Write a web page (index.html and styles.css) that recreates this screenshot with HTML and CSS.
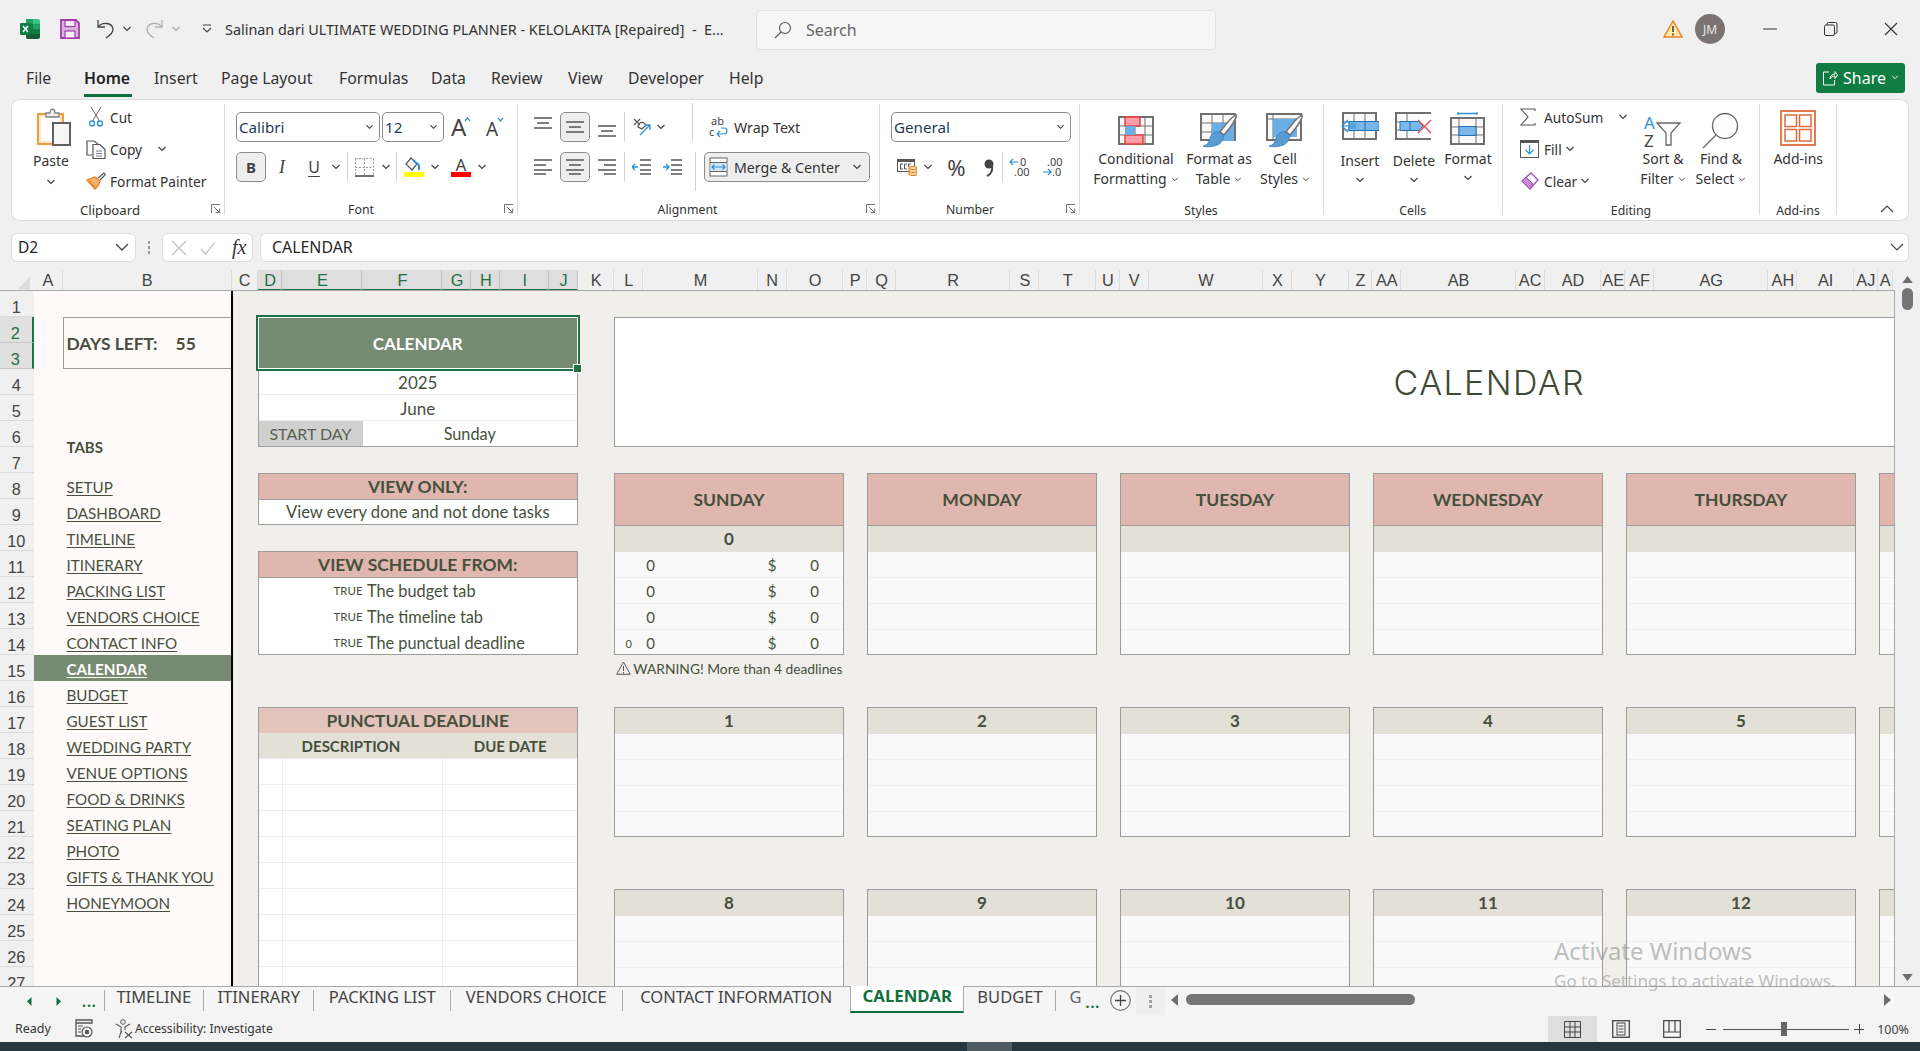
FILE: index.html
```html
<!DOCTYPE html>
<html lang="en">
<head>
<meta charset="utf-8">
<title>Salinan dari ULTIMATE WEDDING PLANNER - KELOLAKITA</title>
<link rel="stylesheet" href="styles.css">
</head>
<body>
<svg class="defs" width="0" height="0">
  <defs>
    <symbol id="chev" viewBox="0 0 10 6"><path d="M1.5 1l3.5 3.5L8.5 1" fill="none" stroke="#404040" stroke-width="1.2"/></symbol>
    <symbol id="launch" viewBox="0 0 11 11"><path d="M.5 10V.5H10M3 3l6.5 6.5M9.5 5v4.5H5" fill="none" stroke="#606060" stroke-width="1"/></symbol>
    <symbol id="brush" viewBox="0 0 38 35"><path d="M36 2C37 5 31 14 24 22l-4-3C26 11 33 3 36 2z" fill="#fff" stroke="#777" stroke-width="1.6"/><path d="M19 19l5 4c-1 5-4 9-10 10-4 1-9 1-11 0 5-1 6-4 7-8 1-4 5-7 9-6z" fill="#5b9bd5" stroke="#3a7fc0" stroke-width=".8"/></symbol>
    <symbol id="al3" viewBox="0 0 18 12"><path d="M0 1h18M3 6h12M0 11h18" stroke="#555" stroke-width="1.5"/></symbol>
    <symbol id="allft" viewBox="0 0 18 16"><path d="M0 1h18M0 6h12M0 11h18M0 15h12" stroke="#555" stroke-width="1.5"/></symbol>
    <symbol id="alctr" viewBox="0 0 18 16"><path d="M0 1h18M3 6h12M0 11h18M3 15h12" stroke="#555" stroke-width="1.5"/></symbol>
    <symbol id="alrgt" viewBox="0 0 18 16"><path d="M0 1h18M6 6h12M0 11h18M6 15h12" stroke="#555" stroke-width="1.5"/></symbol>
  </defs>
</svg>
<div class="app">

  <header class="titlebar">
    <svg class="tb-excel" width="20" height="20" viewBox="0 0 20 20"><path d="M6 0h12a2 2 0 0 1 2 2v3H6z" fill="#33c481"/><path d="M6 0h7v5H6z" fill="#21a366"/><rect x="6" y="5" width="14" height="5" fill="#21a366"/><rect x="6" y="10" width="14" height="5" fill="#107c41"/><path d="M6 5h7v5H6z" fill="#107c41"/><path d="M6 15h14v3a2 2 0 0 1-2 2H8a2 2 0 0 1-2-2z" fill="#185c37"/><rect y="4" width="11" height="12" rx="1" fill="#0f7b40"/><path d="M3 7l5 6M8 7l-5 6" stroke="#fff" stroke-width="1.6"/></svg>
    <svg class="tb-save" width="20" height="20" viewBox="0 0 20 20"><path d="M1 1h15l3 3v15H1z" fill="#d9b6df" stroke="#a03fa8" stroke-width="1.8"/><rect x="5" y="1.5" width="10" height="6" fill="#f7eef8" stroke="#a03fa8" stroke-width="1.2"/><rect x="5" y="12" width="10" height="7" fill="#f7eef8" stroke="#a03fa8" stroke-width="1.2"/></svg>
    <svg class="tb-undo" width="19" height="20" viewBox="0 0 19 20"><path d="M2 1v7h7M2 8c4-5 14-5 15 2 .5 4-4 7-7 9" fill="none" stroke="#444" stroke-width="1.3"/></svg>
    <svg class="chev tb-c1"><use href="#chev"/></svg>
    <svg class="tb-redo" width="19" height="20" viewBox="0 0 19 20"><path d="M17 1v7h-7M17 8C13 3 3 3 2 10c-.5 4 4 7 7 9" fill="none" stroke="#b0b0b0" stroke-width="1.3"/></svg>
    <svg class="chev tb-c2 faint"><use href="#chev"/></svg>
    <svg class="tb-qat" width="10" height="10" viewBox="0 0 10 10"><path d="M1 1h8M1 4l4 4 4-4" fill="none" stroke="#404040" stroke-width="1.1"/></svg>
    <div class="doc-title">Salinan dari ULTIMATE WEDDING PLANNER - KELOLAKITA [Repaired]  -  E...</div>
    <div class="search">
      <svg width="18" height="18" viewBox="0 0 18 18"><circle cx="11" cy="7" r="5.5" fill="none" stroke="#555" stroke-width="1.1"/><path d="M7 11l-6 6" stroke="#555" stroke-width="1.1"/></svg>
      <span>Search</span>
    </div>
    <svg class="tb-warn" width="20" height="18" viewBox="0 0 20 18"><path d="M10 1L1 17h18z" fill="#fde9a9" stroke="#e8832a" stroke-width="1.5"/><path d="M10 6v6M10 13.5v2" stroke="#444" stroke-width="1.6"/></svg>
    <div class="avatar">JM</div>
    <svg class="tb-min" width="14" height="2" viewBox="0 0 14 2"><path d="M0 1h14" stroke="#333"/></svg>
    <svg class="tb-max" width="14" height="14" viewBox="0 0 14 14"><path d="M3 3V2a1.5 1.5 0 0 1 1.5-1.5h7A1.5 1.5 0 0 1 13 2v8a1.5 1.5 0 0 1-1.5 1.5H11" fill="none" stroke="#333"/><rect x=".5" y="3" width="10" height="10.500" rx="1.500" fill="none" stroke="#333"/></svg>
    <svg class="tb-close" width="14" height="14" viewBox="0 0 14 14"><path d="M1 1l12 12M13 1L1 13" stroke="#333" stroke-width="1.100"/></svg>
  </header>

  <nav class="menubar">
    <span class="m-file">File</span>
    <span class="m-home">Home</span>
    <span class="m-insert">Insert</span>
    <span class="m-layout">Page Layout</span>
    <span class="m-form">Formulas</span>
    <span class="m-data">Data</span>
    <span class="m-review">Review</span>
    <span class="m-view">View</span>
    <span class="m-dev">Developer</span>
    <span class="m-help">Help</span>
    <button class="share">
      <svg width="16" height="16" viewBox="0 0 16 16"><path d="M7 2H1.500v13h11V10M8 9c0-3 2-5 5-5V1.500L15.500 5 13 8.500V6c-2 0-4 1-5 3z" fill="none" stroke="#fff" stroke-width="1"/></svg>
      <span>Share</span>
      <svg class="chev white" viewBox="0 0 10 6"><path d="M1.500 1l3.500 3.500L8.500 1" fill="none" stroke="#fff" stroke-width="1.200"/></svg>
    </button>
  </nav>

  <section class="ribbon">
    <div class="grp g-clip">
      <div class="grp-body">
        <div class="bigbtn paste">
          <svg width="34" height="38" viewBox="0 0 34 38"><rect x="1" y="6" width="25" height="30" fill="#fce7c8" stroke="#ee9b3b" stroke-width="2"/><rect x="4" y="9" width="19" height="24" fill="#fff"/><path d="M9 9V5h4c0-5 5-5 5 0h4v4z" fill="#eee" stroke="#808080" stroke-width="1.300"/><rect x="16" y="15" width="17" height="22" fill="#f6f6f6" stroke="#606060" stroke-width="2"/></svg>
          <span class="bt">Paste</span>
          <svg class="chev"><use href="#chev"/></svg>
        </div>
        <div class="smalls">
          <div class="srow"><span class="si"><svg width="14" height="20" viewBox="0 0 14 20"><path d="M2 0l8.500 14M12 0L3.500 14" stroke="#666" stroke-width="1"/><circle cx="3" cy="16.500" r="2.500" fill="none" stroke="#2f8fd8" stroke-width="1.400"/><circle cx="11" cy="16.500" r="2.500" fill="none" stroke="#2f8fd8" stroke-width="1.400"/></svg></span>Cut</div>
          <div class="srow"><span class="si"><svg width="20" height="19" viewBox="0 0 20 19"><path d="M6 15H1V1h7l4 3" fill="none" stroke="#555" stroke-width="1.200"/><path d="M7 4.500h7l5 5V18.500H7z" fill="#fff" stroke="#555" stroke-width="1.200"/><path d="M10 11h6M10 13.500h6M10 16h6" stroke="#777"/></svg></span>Copy<svg class="chev ml15"><use href="#chev"/></svg></div>
          <div class="srow"><span class="si"><svg width="20" height="18" viewBox="0 0 20 18"><path d="M1 8l8 9 3-3 2-5-5-4z" fill="#f3b36a" stroke="#e87e1f" stroke-width="1.300"/><path d="M12 6l6-5 1.500 1.500L14 8" fill="#fff" stroke="#555" stroke-width="1.200"/><path d="M4 9l5 6" stroke="#e87e1f"/></svg></span>Format Painter</div>
        </div>
      </div>
      <div class="grp-label"><span class="lbl-clip">Clipboard</span><svg class="launch"><use href="#launch"/></svg></div>
    </div>

    <div class="grp g-font">
      <div class="rows">
        <div class="row pl11">
          <div class="sel w144"><span>Calibri</span><svg class="chev sm"><use href="#chev"/></svg></div>
          <div class="sel w62 ml2"><span>12</span><svg class="chev sm"><use href="#chev"/></svg></div>
          <svg class="ml7 over" width="20" height="24" viewBox="0 0 20 24"><text x="0" y="21" class="glyph-a" font-size="24">A</text><path d="M14 6l2.500-3L19 6" fill="none" stroke="#2f8fd8" stroke-width="1.200"/></svg>
          <svg class="ml15 over" width="18" height="24" viewBox="0 0 18 24"><text x="0" y="21" class="glyph-a" font-size="19">A</text><path d="M12 3l2.500 3L17 3" fill="none" stroke="#2f8fd8" stroke-width="1.200"/></svg>
        </div>
        <div class="row pl11 mt10">
          <div class="tog bold">B</div>
          <span class="tx ital ml8">I</span>
          <span class="tx under ml16">U</span>
          <svg class="chev ml9"><use href="#chev"/></svg>
          <i class="vsep ml6"></i>
          <svg class="ml7" width="19" height="19" viewBox="0 0 19 19"><path d="M.5.500h18M.5 9.500h18M.5.500v18M9.500.500v18M18.500.500v18" stroke="#999" stroke-dasharray="2 1.500" fill="none"/><path d="M0 18h19" stroke="#444" stroke-width="1.500"/></svg>
          <svg class="chev ml7"><use href="#chev"/></svg>
          <i class="vsep ml5"></i>
          <span class="colour ml7"><svg width="20" height="15" viewBox="0 0 20 15"><path d="M7 1L2 7l6 6 5-6z" fill="#fff" stroke="#555" stroke-width="1.200"/><path d="M9 3l6 5" stroke="#2f8fd8" stroke-width="2"/><path d="M15 8v5" stroke="#2f8fd8" stroke-width="2"/></svg><b class="bar yellow"></b></span>
          <svg class="chev ml6"><use href="#chev"/></svg>
          <span class="colour ml11"><span class="cA">A</span><b class="bar red"></b></span>
          <svg class="chev ml6"><use href="#chev"/></svg>
        </div>
      </div>
      <div class="grp-label"><span class="lbl-font">Font</span><svg class="launch"><use href="#launch"/></svg></div>
    </div>

    <div class="grp g-align">
      <div class="rows">
        <div class="row pl16">
          <svg class="ai at" viewBox="0 0 18 12"><use href="#al3"/></svg>
          <div class="tog ml8"><svg class="ai" viewBox="0 0 18 12"><use href="#al3"/></svg></div>
          <svg class="ai ab ml8" viewBox="0 0 18 12"><use href="#al3"/></svg>
          <i class="vsep ml8"></i>
          <svg class="ml7" width="20" height="20" viewBox="0 0 20 20"><path d="M2 2l6 6M8 2L2 8M6 10a4 4 0 0 1 6-4l2 2-4 4z" fill="none" stroke="#555" stroke-width="1.200"/><path d="M8 18L18 8M13 8h5v5" fill="none" stroke="#2f8fd8" stroke-width="1.300"/></svg>
          <svg class="chev ml4"><use href="#chev"/></svg>
          <i class="vsep long ml26"></i>
          <svg class="ml16 over" width="19" height="22" viewBox="0 0 19 22"><text x="2" y="9" class="glyph-s" font-size="11">ab</text><text x="0" y="20" class="glyph-s" font-size="11">c</text><path d="M8 18h7a3 3 0 0 0 0-6h-3M8 18l3-3M8 18l3 3" fill="none" stroke="#2f8fd8" stroke-width="1.200"/></svg>
          <span class="lab ml6">Wrap Text</span>
        </div>
        <div class="row pl16 mt10">
          <svg class="ai2" viewBox="0 0 18 16"><use href="#allft"/></svg>
          <div class="tog ml8"><svg class="ai2" viewBox="0 0 18 16"><use href="#alctr"/></svg></div>
          <svg class="ai2 ml8" viewBox="0 0 18 16"><use href="#alrgt"/></svg>
          <i class="vsep ml8"></i>
          <svg class="ml7" width="19" height="16" viewBox="0 0 19 16"><path d="M8 1h11M8 6h11M8 11h11M8 15h11" stroke="#555" stroke-width="1.300"/><path d="M6 8H0M3 5L0 8l3 3" fill="none" stroke="#2f8fd8" stroke-width="1.300"/></svg>
          <svg class="ml12" width="19" height="16" viewBox="0 0 19 16"><path d="M8 1h11M8 6h11M8 11h11M8 15h11" stroke="#555" stroke-width="1.300"/><path d="M0 8h6M3 5l3 3-3 3" fill="none" stroke="#2f8fd8" stroke-width="1.300"/></svg>
          <i class="vsep long ml13"></i>
          <div class="merge ml8">
            <svg width="19" height="20" viewBox="0 0 19 20"><rect x="1" y="1" width="17" height="18" fill="#fff" stroke="#666"/><path d="M1 5.500h17M1 14.500h17" stroke="#666"/><rect x="1.500" y="6" width="16" height="8" fill="#cfe6f7"/><path d="M3 10h13M5.500 7.500L3 10l2.500 2.500M13.500 7.500L16 10l-2.500 2.500" fill="none" stroke="#2f8fd8" stroke-width="1.200"/></svg>
            <span>Merge &amp; Center</span>
            <svg class="chev"><use href="#chev"/></svg>
          </div>
        </div>
      </div>
      <div class="grp-label"><span class="lbl-align">Alignment</span><svg class="launch"><use href="#launch"/></svg></div>
    </div>

    <div class="grp g-num">
      <div class="rows">
        <div class="row pl11">
          <div class="sel w180"><span>General</span><svg class="chev sm"><use href="#chev"/></svg></div>
        </div>
        <div class="row pl16 mt10">
          <svg width="20" height="18" viewBox="0 0 20 18"><rect x=".5" y="1.500" width="17" height="12" fill="#fff" stroke="#555"/><path d="M1 3h16" stroke="#555" stroke-width="2"/><path d="M6 6H3.500v5H6M10 6H7.500v5H10M14 6h-2.500v3" fill="none" stroke="#555"/><path d="M12 10c0-2 8-2 8 0v6c0 2-8 2-8 0z" fill="#fbd9ae" stroke="#e87e1f" stroke-width="1.200"/><path d="M12 10c0 2 8 2 8 0M12 13c0 2 8 2 8 0" fill="none" stroke="#e87e1f"/></svg>
          <svg class="chev ml6"><use href="#chev"/></svg>
          <span class="pct ml14">%</span>
          <svg class="comma ml16" width="12" height="18" viewBox="0 0 12 18"><circle cx="6" cy="5" r="4.500" fill="#444"/><path d="M9 7c1 5-1 8-5 10" fill="none" stroke="#444" stroke-width="2"/></svg>
          <i class="vsep ml7"></i>
          <svg class="ml6 over" width="21" height="20" viewBox="0 0 21 20"><path d="M9 5H1M4 2L1 5l3 3" fill="none" stroke="#2f8fd8" stroke-width="1.200"/><text x="11" y="9" class="glyph-s" font-size="11">0</text><text x="5" y="19" class="glyph-s" font-size="11">.00</text></svg>
          <svg class="ml12 over" width="20" height="20" viewBox="0 0 20 20"><text x="5" y="9" class="glyph-s" font-size="11">.00</text><path d="M1 15h8M6 12l3 3-3 3" fill="none" stroke="#2f8fd8" stroke-width="1.200"/><text x="10" y="19" class="glyph-s" font-size="11">.0</text></svg>
        </div>
      </div>
      <div class="grp-label"><span class="lbl-num">Number</span><svg class="launch"><use href="#launch"/></svg></div>
    </div>

    <div class="grp g-styles">
      <div class="bigs pl14">
        <div class="bigbtn w84">
          <span class="ic"><svg width="36" height="29" viewBox="0 0 36 29"><rect x="1" y="1" width="34" height="27" fill="#fafafa" stroke="#707070" stroke-width="2"/><path d="M27 1v27M1 10h34M1 19h34M17 1v27" stroke="#707070"/><rect x="7" y="1" width="15" height="9" fill="#ff9ea8" stroke="#e04040" stroke-width="1.500"/><rect x="7" y="19" width="18" height="9" fill="#ff9ea8" stroke="#e04040" stroke-width="1.500"/><rect x="7" y="10" width="10" height="9" fill="#6aaee8"/></svg></span>
          <span class="bt">Conditional</span><span class="bt">Formatting <svg class="chev in"><use href="#chev"/></svg></span>
        </div>
        <div class="bigbtn w82">
          <span class="ic"><svg width="38" height="35" viewBox="0 0 38 35"><rect x="1" y="1" width="34" height="26" fill="#fafafa" stroke="#707070" stroke-width="2"/><path d="M12 1v26M23 1v26M1 10h34M1 19h34" stroke="#707070"/><rect x="12" y="10" width="22" height="18" fill="#6aaee8"/><use href="#brush" width="38" height="35"/></svg></span>
          <span class="bt">Format as</span><span class="bt">Table <svg class="chev in"><use href="#chev"/></svg></span>
        </div>
        <div class="bigbtn w50">
          <span class="ic"><svg width="38" height="35" viewBox="0 0 38 35"><rect x="1" y="1" width="34" height="26" fill="#fafafa" stroke="#707070" stroke-width="2"/><path d="M1 6h34M7 1v26" stroke="#707070"/><rect x="7" y="6" width="24" height="18" fill="#6aaee8"/><use href="#brush" width="38" height="35"/></svg></span>
          <span class="bt">Cell</span><span class="bt">Styles <svg class="chev in"><use href="#chev"/></svg></span>
        </div>
      </div>
      <div class="grp-label"><span class="lbl-styles">Styles</span></div>
    </div>

    <div class="grp g-cells">
      <div class="bigs pl9">
        <div class="bigbtn w54 low">
          <span class="ic"><svg width="39" height="28" viewBox="0 0 39 28"><rect x="3" y="1" width="33" height="26" fill="#fafafa" stroke="#707070" stroke-width="2"/><path d="M14 1v26M25 1v26M3 10h33M3 18h33" stroke="#707070"/><rect x="9" y="9.500" width="30" height="9" fill="#7ab6ea" stroke="#1f72b8"/><path d="M25 9v10" stroke="#1f72b8"/><path d="M16 14H2M8 8l-6 6 6 6M8 12h8M8 16h8" fill="none" stroke="#2f8fd8" stroke-width="1.200"/></svg></span>
          <span class="bt">Insert</span><svg class="chev"><use href="#chev"/></svg>
        </div>
        <div class="bigbtn w54 low">
          <span class="ic"><svg width="37" height="28" viewBox="0 0 37 28"><path d="M24 1H1v26h23M24 1h12M24 27h12" fill="#fafafa" stroke="#707070" stroke-width="2"/><path d="M12 1v26M1 10h22M1 18h22" stroke="#707070"/><path d="M5 9.500h19l4 4.500-4 4.500H5z" fill="#7ab6ea" stroke="#1f72b8"/><path d="M15 9v10" stroke="#1f72b8"/><path d="M23 8l13 13M36 8L23 21" stroke="#f04848" stroke-width="1.400"/></svg></span>
          <span class="bt">Delete</span><svg class="chev"><use href="#chev"/></svg>
        </div>
        <div class="bigbtn w54 up">
          <span class="ic"><svg width="35" height="33" viewBox="0 0 35 33"><path d="M8 1.500h19M8 0v3M27 0v3" stroke="#2f8fd8" stroke-width="1.300" fill="none"/><rect x="1" y="6" width="33" height="26" fill="#fafafa" stroke="#707070" stroke-width="2"/><path d="M9 6v26M26 6v26M1 15h33M1 23h33" stroke="#707070"/><rect x="9" y="14.500" width="17" height="9" fill="#7ab6ea" stroke="#1f72b8"/></svg></span>
          <span class="bt">Format</span><svg class="chev"><use href="#chev"/></svg>
        </div>
      </div>
      <div class="grp-label"><span class="lbl-cells">Cells</span></div>
    </div>

    <div class="grp g-edit">
      <div class="grp-body">
        <div class="smalls edit">
          <div class="srow"><span class="si"><svg width="16" height="18" viewBox="0 0 16 18"><path d="M15 3V1H1l7 8-7 8h14v-2" fill="none" stroke="#555" stroke-width="1.100"/></svg></span>AutoSum<svg class="chev ml16b"><use href="#chev"/></svg></div>
          <div class="srow"><span class="si"><svg width="19" height="18" viewBox="0 0 19 18"><rect x=".5" y=".5" width="18" height="17" fill="#fff" stroke="#555"/><path d="M1 2h17" stroke="#555" stroke-width="2"/><path d="M9.500 5v9M5.500 10l4 4 4-4" fill="none" stroke="#2f8fd8" stroke-width="1.200"/></svg></span>Fill<svg class="chev ml3"><use href="#chev"/></svg></div>
          <div class="srow"><span class="si"><svg width="19" height="19" viewBox="0 0 19 19"><path d="M11 1l7 7-8 9-8-8z" fill="#fff" stroke="#9c4fb0" stroke-width="1.300"/><path d="M6 5l7 7-3 5-8-8z" fill="#c98ad6" stroke="#9c4fb0"/></svg></span>Clear<svg class="chev ml3"><use href="#chev"/></svg></div>
        </div>
        <div class="bigbtn w56">
          <span class="ic"><svg class="over" width="37" height="34" viewBox="0 0 37 34"><text x="0" y="15" class="glyph-a blue" font-size="17">A</text><text x="0" y="33" class="glyph-a" font-size="17">Z</text><path d="M13 9h23l-9 10v12h-5V19z" fill="#fff" stroke="#666" stroke-width="1.300"/></svg></span>
          <span class="bt">Sort &amp;</span><span class="bt">Filter <svg class="chev in"><use href="#chev"/></svg></span>
        </div>
        <div class="bigbtn w60">
          <span class="ic"><svg width="37" height="37" viewBox="0 0 37 37"><circle cx="23" cy="14" r="12.500" fill="#fcfcfc" stroke="#666" stroke-width="1.300"/><path d="M14 23L1 36" stroke="#666" stroke-width="1.300"/></svg></span>
          <span class="bt">Find &amp;</span><span class="bt">Select <svg class="chev in"><use href="#chev"/></svg></span>
        </div>
      </div>
      <div class="grp-label"><span class="lbl-edit">Editing</span></div>
    </div>

    <div class="grp g-add">
      <div class="bigs">
        <div class="bigbtn full addins">
          <span class="ic"><svg width="36" height="36" viewBox="0 0 36 36"><rect x="1" y="1" width="34" height="34" fill="#fff" stroke="#e26b3d" stroke-width="1.800"/><rect x="5" y="5" width="11.500" height="11.500" fill="none" stroke="#e26b3d" stroke-width="1.500"/><rect x="19.500" y="5" width="11.500" height="11.500" fill="none" stroke="#e26b3d" stroke-width="1.500"/><rect x="5" y="19.500" width="11.500" height="11.500" fill="none" stroke="#e26b3d" stroke-width="1.500"/><rect x="19.500" y="19.500" width="11.500" height="11.500" fill="none" stroke="#e26b3d" stroke-width="1.500"/></svg></span>
          <span class="bt">Add-ins</span>
        </div>
      </div>
      <div class="grp-label"><span class="lbl-add">Add-ins</span></div>
    </div>
    <svg class="collapse" width="14" height="8" viewBox="0 0 14 8"><path d="M1 7l6-6 6 6" fill="none" stroke="#444" stroke-width="1.200"/></svg>
  </section>

  <section class="formulabar">
    <div class="namebox"><span>D2</span><svg width="14" height="8" viewBox="0 0 14 8"><path d="M1 1l6 6 6-6" fill="none" stroke="#444" stroke-width="1.300"/></svg></div>
    <div class="dots"><i></i><i></i><i></i></div>
    <div class="fxbox">
      <svg width="16" height="16" viewBox="0 0 16 16"><path d="M1 1l14 14M15 1L1 15" stroke="#bdbdbd" stroke-width="1.200"/></svg>
      <svg width="16" height="14" viewBox="0 0 16 14"><path d="M1 8l4.500 5L15 1" fill="none" stroke="#bdbdbd" stroke-width="1.200"/></svg>
      <span class="fx">fx</span>
    </div>
    <div class="fxinput"><span>CALENDAR</span><svg width="14" height="8" viewBox="0 0 14 8"><path d="M1 1l6 6 6-6" fill="none" stroke="#444" stroke-width="1.200"/></svg></div>
  </section>

  <div class="sheetwrap">
    <div class="sheetcol">
      <div class="colheads">
        <div class="corner"><svg width="12" height="12" viewBox="0 0 12 12"><path d="M12 0v12H0z" fill="#dcdcdc"/></svg></div>
        <span class="ch w29">A</span><span class="ch wB">B</span><span class="ch wC">C</span>
        <span class="ch wD on">D</span><span class="ch w80 on">E</span><span class="ch w80 on">F</span><span class="ch w29 on">G</span><span class="ch w29 on">H</span><span class="ch wI on">I</span><span class="ch w29 on">J</span>
        <span class="ch wK">K</span>
        <span class="ch w29">L</span><span class="ch wM">M</span><span class="ch w29">N</span><span class="ch wO">O</span><span class="ch wP">P</span>
        <span class="ch w29">Q</span><span class="ch wM">R</span><span class="ch w29">S</span><span class="ch wO">T</span><span class="ch wP">U</span>
        <span class="ch w29">V</span><span class="ch wM">W</span><span class="ch w29">X</span><span class="ch wO">Y</span><span class="ch wP">Z</span>
        <span class="ch w29">AA</span><span class="ch wM">AB</span><span class="ch w29">AC</span><span class="ch wO">AD</span><span class="ch wP">AE</span>
        <span class="ch w29">AF</span><span class="ch wM">AG</span><span class="ch w29">AH</span><span class="ch wO">AI</span><span class="ch wP">AJ</span>
        <span class="ch w15">A</span>
      </div>
      <div class="sheet">
        <div class="rowheads">
          <span>1</span><span class="on">2</span><span class="on">3</span><span>4</span><span>5</span><span>6</span><span>7</span><span>8</span><span>9</span><span>10</span><span>11</span><span>12</span><span>13</span><span>14</span><span>15</span><span>16</span><span>17</span><span>18</span><span>19</span><span>20</span><span>21</span><span>22</span><span>23</span><span>24</span><span>25</span><span>26</span><span>27</span>
        </div>
        <aside class="panel">
          <div class="days"><span>DAYS LEFT:</span><span class="num">55</span></div>
          <div class="tabs-h">TABS</div>
          <a class="lnk">SETUP</a>
          <a class="lnk">DASHBOARD</a>
          <a class="lnk">TIMELINE</a>
          <a class="lnk">ITINERARY</a>
          <a class="lnk">PACKING LIST</a>
          <a class="lnk">VENDORS CHOICE</a>
          <a class="lnk">CONTACT INFO</a>
          <a class="lnk cur">CALENDAR</a>
          <a class="lnk">BUDGET</a>
          <a class="lnk">GUEST LIST</a>
          <a class="lnk">WEDDING PARTY</a>
          <a class="lnk">VENUE OPTIONS</a>
          <a class="lnk">FOOD &amp; DRINKS</a>
          <a class="lnk">SEATING PLAN</a>
          <a class="lnk">PHOTO</a>
          <a class="lnk">GIFTS &amp; THANK YOU</a>
          <a class="lnk">HONEYMOON</a>
        </aside>
        <main class="canvas">
          <div class="leftcol">
            <div class="box b-cal">
              <div class="calhead">CALENDAR<i class="handle"></i></div>
              <div class="cr big">2025</div>
              <div class="cr big">June</div>
              <div class="cr split"><span class="startlbl">START DAY</span><span class="startval">Sunday</span></div>
            </div>
            <div class="box b-view">
              <div class="phead">VIEW ONLY:</div>
              <div class="cr last">View every done and not done tasks</div>
            </div>
            <div class="box b-sched">
              <div class="phead">VIEW SCHEDULE FROM:</div>
              <div class="sr"><small>TRUE</small>The budget tab</div>
              <div class="sr"><small>TRUE</small>The timeline tab</div>
              <div class="sr"><small>TRUE</small>The punctual deadline</div>
            </div>
            <div class="box b-dead">
              <div class="phead light">PUNCTUAL DEADLINE</div>
              <div class="dhead"><span>DESCRIPTION</span><span>DUE DATE</span></div>
              <div class="dr"><i></i><i></i><i></i></div>
              <div class="dr"><i></i><i></i><i></i></div>
              <div class="dr"><i></i><i></i><i></i></div>
              <div class="dr"><i></i><i></i><i></i></div>
              <div class="dr"><i></i><i></i><i></i></div>
              <div class="dr"><i></i><i></i><i></i></div>
              <div class="dr"><i></i><i></i><i></i></div>
              <div class="dr"><i></i><i></i><i></i></div>
              <div class="dr"><i></i><i></i><i></i></div>
            </div>
          </div>
          <div class="rightcol">
            <div class="titlebox"><span>CALENDAR</span></div>
            <div class="week">
              <div class="card">
                <div class="wk">SUNDAY</div><div class="dt">0</div>
                <div class="ln"><span></span><span>0</span><span>$</span><span>0</span></div>
                <div class="ln"><span></span><span>0</span><span>$</span><span>0</span></div>
                <div class="ln"><span></span><span>0</span><span>$</span><span>0</span></div>
                <div class="ln"><span class="tiny">0</span><span>0</span><span>$</span><span>0</span></div>
              </div>
              <div class="card"><div class="wk">MONDAY</div><div class="dt"></div><div class="ln"></div><div class="ln"></div><div class="ln"></div><div class="ln"></div></div>
              <div class="card"><div class="wk">TUESDAY</div><div class="dt"></div><div class="ln"></div><div class="ln"></div><div class="ln"></div><div class="ln"></div></div>
              <div class="card"><div class="wk">WEDNESDAY</div><div class="dt"></div><div class="ln"></div><div class="ln"></div><div class="ln"></div><div class="ln"></div></div>
              <div class="card"><div class="wk">THURSDAY</div><div class="dt"></div><div class="ln"></div><div class="ln"></div><div class="ln"></div><div class="ln"></div></div>
              <div class="card"><div class="wk"></div><div class="dt"></div><div class="ln"></div><div class="ln"></div><div class="ln"></div><div class="ln"></div></div>
            </div>
            <div class="warnrow"><svg width="15" height="14" viewBox="0 0 15 14"><path d="M7.500 1L.7 13.300h13.600z" fill="none" stroke="#555" stroke-width="1"/><path d="M7.500 5v5M7.500 11v1.500" stroke="#555"/></svg><span>WARNING! More than 4 deadlines</span></div>
            <div class="week w2">
              <div class="card"><div class="dt">1</div><div class="ln"></div><div class="ln"></div><div class="ln"></div><div class="ln"></div></div>
              <div class="card"><div class="dt">2</div><div class="ln"></div><div class="ln"></div><div class="ln"></div><div class="ln"></div></div>
              <div class="card"><div class="dt">3</div><div class="ln"></div><div class="ln"></div><div class="ln"></div><div class="ln"></div></div>
              <div class="card"><div class="dt">4</div><div class="ln"></div><div class="ln"></div><div class="ln"></div><div class="ln"></div></div>
              <div class="card"><div class="dt">5</div><div class="ln"></div><div class="ln"></div><div class="ln"></div><div class="ln"></div></div>
              <div class="card"><div class="dt"></div><div class="ln"></div><div class="ln"></div><div class="ln"></div><div class="ln"></div></div>
            </div>
            <div class="week w3">
              <div class="card"><div class="dt">8</div><div class="ln"></div><div class="ln"></div><div class="ln"></div><div class="ln"></div></div>
              <div class="card"><div class="dt">9</div><div class="ln"></div><div class="ln"></div><div class="ln"></div><div class="ln"></div></div>
              <div class="card"><div class="dt">10</div><div class="ln"></div><div class="ln"></div><div class="ln"></div><div class="ln"></div></div>
              <div class="card"><div class="dt">11</div><div class="ln"></div><div class="ln"></div><div class="ln"></div><div class="ln"></div></div>
              <div class="card"><div class="dt">12</div><div class="ln"></div><div class="ln"></div><div class="ln"></div><div class="ln"></div></div>
              <div class="card"><div class="dt"></div><div class="ln"></div><div class="ln"></div><div class="ln"></div><div class="ln"></div></div>
            </div>
          </div>
        </main>
      </div>
    </div>
    <div class="vscroll">
      <svg class="tri up" viewBox="0 0 12 8"><path d="M6 0l6 8H0z"/></svg>
      <i class="vthumb"></i>
      <svg class="tri dn" viewBox="0 0 12 8"><path d="M0 0h12L6 8z"/></svg>
    </div>
  </div>

  <div class="tabstrip">
    <div class="tabnav">
      <svg class="navtri" viewBox="0 0 8 12"><path d="M6 0v12L0 6z"/></svg>
      <svg class="navtri next" viewBox="0 0 8 12"><path d="M2 0v12l6-6z"/></svg>
      <span class="gdots">...</span>
    </div>
    <span class="stab s1">TIMELINE</span>
    <span class="stab s2">ITINERARY</span>
    <span class="stab s3">PACKING LIST</span>
    <span class="stab s4">VENDORS CHOICE</span>
    <span class="stab s5">CONTACT INFORMATION</span>
    <span class="stab active">CALENDAR</span>
    <span class="stab s7">BUDGET</span>
    <span class="stab s8"><span class="cutg">G</span><span class="gdots">...</span></span>
    <svg class="addsheet" width="21" height="21" viewBox="0 0 21 21"><circle cx="10.500" cy="10.500" r="9.800" fill="none" stroke="#777" stroke-width="1.200"/><path d="M10.500 5v11M5 10.500h11" stroke="#444" stroke-width="1.300"/></svg>
    <div class="splitter"><i></i><i></i><i></i></div>
    <svg class="hArrow" viewBox="0 0 8 12"><path d="M7 0v12L0 6z"/></svg>
    <i class="hthumb"></i>
    <svg class="hArrow right" viewBox="0 0 8 12"><path d="M1 0v12l7-6z"/></svg>
  </div>

  <footer class="status">
    <span class="ready">Ready</span>
    <svg class="st-mac" width="18" height="19" viewBox="0 0 18 19"><path d="M1 1h16v3H1zM1 4v13h9" fill="none" stroke="#555" stroke-width="1.300"/><path d="M3 7h5M3 10h3M3 13h3" stroke="#555"/><circle cx="12" cy="13" r="5" fill="#f3f3f3" stroke="#555" stroke-width="1.200"/><circle cx="12" cy="13" r="2.200" fill="#555"/></svg>
    <svg class="st-acc" width="18" height="20" viewBox="0 0 18 20"><circle cx="8" cy="3" r="2.300" fill="none" stroke="#555"/><path d="M1 5l5 3v5l-2 6M15 5l-5 3v3M6 14l1-2" fill="none" stroke="#555" stroke-width="1.100"/><path d="M10 13l7 6M17 13l-7 6" stroke="#555" stroke-width="1.100"/></svg>
    <span class="acc">Accessibility: Investigate</span>
    <div class="st-right">
      <span class="vw active"><svg width="17" height="17" viewBox="0 0 17 17"><path d="M.5.500h16v16H.5zM.5 6h16M.5 11h16M6 .500v16M11 .500v16" fill="none" stroke="#444"/></svg></span>
      <span class="vw"><svg width="18" height="18" viewBox="0 0 18 18"><rect x=".7" y=".7" width="16.600" height="16.600" fill="none" stroke="#444" stroke-width="1.300"/><rect x="5" y="3" width="8" height="12" fill="none" stroke="#444"/><path d="M6.500 6h5M6.500 9h5M6.500 12h5" stroke="#444"/></svg></span>
      <span class="vw"><svg width="18" height="18" viewBox="0 0 18 18"><path d="M.7.700h16.600v16.600H.7zM.7 12h16.600M6 .700V12M12 .700V12" fill="none" stroke="#444" stroke-width="1.200"/></svg></span>
      <span class="zm minus"></span>
      <div class="slider"><i></i></div>
      <span class="zm plus"></span>
      <span class="zoomv">100%</span>
    </div>
  </footer>

  <div class="taskbar"><i></i></div>

  <div class="watermark">
    <div class="w1">Activate Windows</div>
    <div class="w2t">Go to Settings to activate Windows.</div>
  </div>
</div>
</body>
</html>
```
FILE: styles.css
```css
*{box-sizing:border-box}
html,body{margin:0;padding:0;height:100%;overflow:hidden}
body{background:#f0f0f0;font-family:"Noto Sans",sans-serif;color:#262626;font-size:13px}
.defs{position:absolute}
.app{position:relative;width:1920px;height:1051px;display:flex;flex-direction:column;overflow:hidden}
svg{display:block;flex:none}
svg.over{overflow:visible}

/* utility spacing */
.ml2{margin-left:2px}.ml3{margin-left:3px}.ml4{margin-left:4px}.ml5{margin-left:5px}.ml6{margin-left:6px}.ml7{margin-left:7px}.ml8{margin-left:8px}.ml9{margin-left:9px}.ml11{margin-left:11px}.ml12{margin-left:12px}.ml13{margin-left:13px}.ml14{margin-left:14px}.ml15{margin-left:15px}.ml16{margin-left:16px}.ml26{margin-left:26px}.ml16b{margin-left:15px}
.mt10{margin-top:10px}
.pl9{padding-left:9.300px}.pl11{padding-left:11px}.pl14{padding-left:14px}.pl16{padding-left:16.500px}

/* title bar */
.titlebar{height:58px;display:flex;align-items:center;padding-left:20px;flex:none}
.tb-save{margin-left:20px}
.tb-undo{margin-left:16px}
.chev{width:10px;height:6px}
.tb-c1{margin-left:7px}
.tb-redo{margin-left:13px}
.tb-c2{margin-left:7px}
.faint{opacity:.4}
.tb-qat{margin-left:21px}
.doc-title{margin-left:13px;width:531px;font-size:14.400px;white-space:pre;color:#333;line-height:20px;position:relative;top:1px}
.search{width:460px;height:40px;background:#f6f6f6;border:1px solid #e2e2e2;border-radius:4px;display:flex;align-items:center;padding-left:17px;color:#666;font-size:16px;margin-top:2px}
.search span{margin-left:14px}
.tb-warn{margin-left:447px}
.avatar{margin-left:12px;width:30px;height:30px;border-radius:50%;background:#7b7373;color:#e8e4e4;font-size:12px;display:flex;align-items:center;justify-content:center}
.tb-min{margin-left:38px}
.tb-max{margin-left:47px}
.tb-close{margin-left:46px}

/* menu */
.menubar{height:41px;display:flex;align-items:center;flex:none;position:relative;font-size:15.800px;color:#333}
.menubar>span{display:block;line-height:22px;flex:none;position:relative;top:-1px}
.m-file{margin-left:26px;width:58px}
.m-home{width:70px;font-weight:600;color:#222}
.m-home::after{content:"";position:absolute;left:0;bottom:-8px;width:48px;height:3px;background:#107040}
.m-insert{width:67px}
.m-layout{width:118px}
.m-form{width:92px}
.m-data{width:60px}
.m-review{width:77px}
.m-view{width:60px}
.m-dev{width:101px}
.m-help{width:60px}
.share{margin-left:auto;margin-right:15px;width:89px;height:30px;margin-top:-2px;background:#107c41;border:0;border-radius:3px;display:flex;align-items:center;color:#fff;font-family:inherit;font-size:16px;padding:0 6px 0 6px;gap:5px}
.share .chev{margin-left:auto;width:8px;height:5px}

/* ribbon */
.ribbon{margin:0 11px;width:1898px;height:122px;background:#fff;border:1px solid #dcdcdc;border-radius:9px;display:flex;padding-top:4px;flex:none}
.grp{height:111px;border-right:1px solid #dcdcdc;display:flex;flex-direction:column;flex:none;position:relative}
.g-clip{width:213px}.g-font{width:292.500px}.g-align{width:362.500px}.g-num{width:200px}.g-styles{width:243.700px}.g-cells{width:179.300px}.g-edit{width:257px}.g-add{width:77.500px}
.grp-body{display:flex;height:97px}
.grp-label{position:absolute;left:0;right:0;top:98px;height:16px;font-size:12.300px;line-height:16px;color:#333}
.grp-label span{position:absolute;transform:translateX(-50%);white-space:nowrap}
.launch{position:absolute;width:10px;height:10px;top:2px;right:3px}
.lbl-clip{left:98px;font-size:13.200px}.lbl-font{left:136px}.lbl-align{left:170px}.lbl-num{left:90px}
.lbl-styles{left:121px;top:1px}.lbl-cells{left:89px;top:1px}.lbl-edit{left:128px;top:1px}.lbl-add{left:38px;top:1px}

.bigbtn{display:flex;flex-direction:column;align-items:center;font-size:14px;line-height:20px;flex:none;color:#333}
.bigbtn .ic{height:37px;margin-top:8px;display:flex;align-items:center;justify-content:flex-start;margin-bottom:0}
.bigbtn .bt{white-space:nowrap;display:flex;align-items:center;gap:4px}
.bigbtn.low .bt{margin-top:2px}
.bigbtn.low .ic{align-items:flex-start}
.bigbtn.up .ic{margin-top:3px;height:42px}
.bigbtn.up>.chev,.bigbtn.low>.chev{margin-top:6px}
.chev.in{width:8px;height:5px}
.bigs{display:flex;height:97px}
.w84{width:84px}.w82{width:82px}.w50{width:50px}.w54{width:54px}.w56{width:56px}.w60{width:60px}
.full{width:100%}
.addins .ic{margin-top:3px;height:42px}

.paste{width:73px;padding-top:4px;padding-left:5px}
.paste svg:first-child{margin-left:6px}
.paste .bt{margin-top:5px}
.paste .chev{margin-top:8px}
.smalls{margin-top:-3px}
.srow{height:32px;display:flex;align-items:center;font-size:13.700px;color:#333;white-space:nowrap}
.si{width:25px;display:flex;justify-content:center;flex:none;padding-right:3px}
.smalls.edit{width:132px;padding-left:17px}
.smalls.edit .si{width:24px;justify-content:flex-start}

.rows{padding-top:8px;height:97px}
.row{display:flex;align-items:center;height:30px}
.sel{height:30px;border:1px solid #8c8c8c;border-radius:5px;display:flex;align-items:center;justify-content:space-between;padding:0 5px 0 2px;font-size:15.200px;color:#1f3b57}
.w144{width:144px}.w62{width:62px}.w180{width:180px}
.sel .chev.sm{width:9px;height:6px}
.glyph-a{font-family:"Noto Sans",sans-serif;fill:#444}
.glyph-a.blue{fill:#2f8fd8}
.glyph-s{font-family:"Noto Sans",sans-serif;fill:#444}
.tog{width:30px;height:30px;background:#eeeeee;border:1px solid #8c8c8c;border-radius:5px;display:flex;align-items:center;justify-content:center;flex:none}
.bold{font-weight:700;font-size:15px;color:#444}
.tx{width:16px;text-align:center;font-size:16px;color:#444}
.ital{font-style:italic;font-family:"Liberation Serif",serif;font-size:18px}
.under{text-decoration:underline;text-underline-offset:3px}
.vsep{display:block;width:1px;height:30px;background:#d2d2d2;flex:none}
.vsep.long{height:39px;margin-top:-9px}
.row + .row .vsep.long{margin-top:0;margin-bottom:-9px;height:39px}
.colour{width:20px;display:flex;flex-direction:column;align-items:center;flex:none}
.bar{display:block;width:20px;height:5px}
.yellow{background:#ffff00}.red{background:#ff0000}
.cA{font-size:17px;line-height:15px;color:#444}
.ai{width:18px;height:12px;display:block}
.ai.at{margin-top:-8px}.ai.ab{margin-top:8px}
.ai2{width:18px;height:16px;display:block}
.lab{font-size:14.200px;color:#333;white-space:nowrap}
.merge{width:166px;height:30px;background:#eeeeee;border:1px solid #8c8c8c;border-radius:5px;display:flex;align-items:center;padding:0 7px 0 4px;font-size:14.200px;color:#333;flex:none}
.merge span{margin-left:6px;white-space:nowrap}
.merge .chev{margin-left:auto}
.pct{font-size:22px;color:#444;width:20px;text-align:center;line-height:24px}
.comma{margin-top:1px}
.collapse{margin-left:43px;margin-top:101px}

/* formula bar */
.formulabar{height:49px;padding:12px 0 8px 11px;display:flex;flex:none}
.namebox{width:125px;height:29px;background:#fff;border:1px solid #dedede;border-radius:6px;display:flex;align-items:center;justify-content:space-between;padding:0 6px 2px 6px;font-size:15.500px;color:#262626}
.dots{width:26px;display:flex;flex-direction:column;align-items:center;justify-content:center;gap:2px;flex:none}
.dots i{display:block;width:2px;height:3px;background:#9a9a9a}
.fxbox{width:91px;height:29px;background:#fff;border:1px solid #dedede;border-radius:6px;display:flex;align-items:center;padding-left:8px;gap:13px}
.fx{font-family:"Liberation Serif",serif;font-style:italic;font-size:20px;color:#333;margin-left:3px}
.fxinput{width:1649px;margin-left:7px;height:29px;background:#fff;border:1px solid #dedede;border-radius:6px;display:flex;align-items:center;justify-content:space-between;padding:0 4px 2px 11px;font-size:15.900px;color:#262626}

/* sheet */
.sheetwrap{height:716px;display:flex;flex:none}
.sheetcol{width:1895px;display:flex;flex-direction:column}
.colheads{height:21px;display:flex;background:#f0f0f0;flex:none;border-bottom:1px solid #a9a9a9;font-family:"Liberation Sans",sans-serif;overflow:hidden}
.corner{width:33.500px;flex:none;display:flex;justify-content:flex-end;align-items:flex-end;padding:0 4px 1px 0}
.ch{flex:none;display:block;text-align:center;font-size:16.300px;line-height:21px;height:21px;color:#444;border-right:1px solid #dcdcdc;overflow:hidden;padding-left:1px}
.ch.on{background:#dedede;color:#1f7145;border-bottom:2px solid #1f7145;border-right-color:#c4c4c4;height:21px}
.w29{width:29px}.wB{width:169.400px}.wC{width:25.700px}.wD{width:24.900px}.w80{width:80px}.wI{width:48.600px}.wK{width:36.300px}
.wM{width:114.300px}.wO{width:56.700px}.wP{width:23.700px}.w15{width:15px}

.sheet{height:695px;display:flex;overflow:hidden;border-right:1px solid #a9a9a9}
.rowheads{width:33.500px;flex:none;display:flex;flex-direction:column;background:#f0f0f0;font-family:"Liberation Sans",sans-serif}
.rowheads span{height:26px;flex:none;text-align:center;font-size:16.300px;line-height:32px;color:#444;border-bottom:1px solid #dcdcdc;padding-right:1px;overflow:hidden}
.rowheads span.on{background:#e0e0e0;color:#1f7145;border-right:2px solid #1f7145;border-bottom-color:#c4c4c4}

.panel{width:197.500px;flex:none;background:#fffafa;display:flex;flex-direction:column;padding-top:26px;font-family:Lato,sans-serif;color:#46503c;font-size:15.200px}
.days{margin-left:29px;height:52px;border:1px solid #9c9c9c;border-right:0;display:flex;align-items:center;padding-left:3px;font-weight:700;font-size:17.400px;flex:none}
.days .num{margin-left:18px}
.tabs-h{margin-top:52px;height:52px;line-height:52px;padding-left:33px;font-weight:700;font-size:15px;flex:none}
.lnk{height:26px;line-height:28px;padding-left:33px;flex:none;text-decoration:underline;text-underline-offset:2px;white-space:nowrap}
.lnk.cur{background:#778a72;color:#fff;font-weight:700}
.canvas{flex:1;border-left:2px solid #000;background:#f0efeb;display:flex;font-family:Lato,sans-serif;color:#46503c;padding-left:24.500px;overflow:hidden;min-width:0}
.leftcol{width:320.500px;flex:none;padding-top:26px}
.rightcol{width:1281px;margin-left:36.300px;padding-top:26px;flex:none;overflow:hidden}

.box{border:1px solid #9c9c9c;background:#fff}
.b-cal{height:130px;border-top:0;position:relative}
.calhead{height:52px;background:#778a72;color:#fff;font-weight:700;font-size:17px;display:flex;align-items:center;justify-content:center;border:1px solid #fff;outline:2.500px solid #1f7145;margin:0 -1px;position:relative;z-index:2}
.handle{position:absolute;right:-5px;bottom:-5px;width:7px;height:7px;background:#1f7145;border:1px solid #fff;box-sizing:content-box;z-index:3}
.cr{height:26px;display:flex;align-items:center;justify-content:center;border-bottom:1px solid #ededed;font-size:15px}
.cr.big{font-size:17px;padding-top:2px}
.cr.last{border-bottom:0;height:24px;font-size:16.600px}
.cr.split{justify-content:flex-start;border-bottom:0;height:25px}
.startlbl{width:104px;height:100%;background:#d0d0d0;color:#59604f;display:flex;align-items:center;justify-content:center;font-size:16px}
.startval{flex:1;text-align:center;font-size:16.300px}
.b-view{margin-top:26px;height:52px}
.b-sched{margin-top:26px;height:104px}
.b-dead{margin-top:52px;height:300px}
.phead{height:26px;background:#dfb7ae;border-bottom:1px solid #9c9c9c;display:flex;align-items:center;justify-content:center;font-weight:700;font-size:17.400px;padding-bottom:1px}
.phead.light{background:#e3c4bc;border-bottom:0;height:25px}
.sr{height:26px;display:flex;align-items:center;padding-left:75px;font-size:16.300px;white-space:nowrap;padding-bottom:2px}
.sr small{font-size:11.500px;width:33.500px;flex:none}
.dhead{height:26px;background:#e3e0d8;display:flex;font-weight:700;font-size:15px;align-items:center;border-bottom:1px solid #ededed}
.dhead span:first-child{width:184.900px;text-align:center}
.dhead span:last-child{flex:1;text-align:center}
.dr{height:26px;display:flex;border-bottom:1px solid #ededed;background:#fff}
.dr i{display:block;border-right:1px solid #ededed}
.dr i:nth-child(1){width:24.900px}
.dr i:nth-child(2){width:160px}
.dr i:nth-child(3){flex:1;border-right:0}

.titlebox{height:130px;background:#fff;border:1px solid #9c9c9c;border-right:0;display:flex;align-items:center;justify-content:center;padding-left:468px;font-family:Inter,sans-serif;font-weight:300;font-size:34px;letter-spacing:1.400px;color:#3f4a36}
.week{display:flex;gap:23.600px;margin-top:26px;width:1600px}
.card{width:229.400px;flex:none;border:1px solid #9c9c9c;background:#f9f9f9;overflow:hidden}
.week .card{height:182px}
.wk{height:52px;background:#dfb7ae;border-bottom:1px solid #9c9c9c;display:flex;align-items:center;justify-content:center;font-weight:700;font-size:17.500px}
.dt{height:26px;background:#e3e0d8;display:flex;align-items:center;justify-content:center;font-weight:700;font-size:17px;padding-bottom:2px}
.ln{height:26px;border-bottom:1px solid #efefef;display:grid;grid-template-columns:28px 114.300px 29px 1fr;align-items:center;font-size:15px}
.ln:last-child{border-bottom:0}
.ln span:nth-child(2){padding-left:3px}
.ln span:nth-child(3),.ln span:nth-child(4){text-align:center}
.ln .tiny{font-size:11px;text-align:center;padding-right:1px}
.warnrow{height:26px;display:flex;align-items:center;padding-left:2px;font-size:13.800px;gap:2px;white-space:nowrap;margin-bottom:26px}
.week.w2{margin-top:0}
.week.w2 .card{height:130px}
.week.w3{margin-top:52px}
.week.w3 .card{height:130px}

.vscroll{width:25px;height:716px;display:flex;flex-direction:column;align-items:center;padding-top:6px;background:#f0f0f0}
.tri{width:11px;height:7px;fill:#6e6e6e}
.vthumb{display:block;width:11px;height:22px;border-radius:6px;background:#757575;margin-top:5px}
.tri.dn{margin-top:auto;margin-bottom:5px}

/* tab strip */
.tabstrip{height:29px;background:#f5f5f5;display:flex;align-items:flex-start;flex:none;border-top:1px solid #a9a9a9;position:relative}
.tabnav{width:103.700px;height:28px;display:flex;align-items:center;padding-left:27px;flex:none}
.navtri{width:6px;height:11px;fill:#107040}
.navtri.next{margin-left:22px}
.gdots{color:#107040;font-weight:700;font-size:14px;line-height:14px;letter-spacing:1px}
.tabnav .gdots{margin-left:21px;margin-top:2px}
.stab{display:block;height:21px;margin-top:3px;border-left:1px solid #a9a9a9;text-align:center;line-height:13px;font-size:16.500px;color:#444;flex:none;white-space:nowrap}
.s1{width:99.300px}.s2{width:110.500px}.s3{width:136.500px}.s4{width:171.600px}.s5{width:228.400px}.s7{width:91px;border-left:0}
.stab.active{width:114.500px;height:27px;margin-top:-1px;padding-top:3px;background:#fff;border:0;border-bottom:2px solid #107040;border-left:1px solid #a9a9a9;border-right:1px solid #a9a9a9;color:#107040;font-weight:700;font-size:16.800px}
.s8{width:56px;display:flex;padding-left:13px;gap:4px}
.s8 .gdots{margin-top:6px}
.cutg{width:12px;overflow:hidden;text-align:left;color:#666}
.addsheet{margin-left:-1px;margin-top:3px}
.splitter{width:29px;height:28px;background:#efefef;margin-left:4.500px;display:flex;flex-direction:column;align-items:center;justify-content:center;gap:2px}
.splitter i{display:block;width:3px;height:3px;background:#a0a0a0}
.hArrow{width:8px;height:12px;fill:#6e6e6e;margin-left:6px;margin-top:7px}
.hthumb{display:block;width:229px;height:11px;border-radius:6px;background:#757575;margin-left:7px;margin-top:7px}
.hArrow.right{margin-left:468px}

/* status */
.status{height:27px;background:#f3f3f3;display:flex;align-items:center;flex:none;font-size:12.500px;color:#333;padding-left:15px}
.st-mac{margin-left:24px}
.st-acc{margin-left:22px}
.acc{margin-left:2px;white-space:nowrap;font-size:12.100px}
.st-right{margin-left:auto;display:flex;align-items:center;height:26px;margin-top:1px}
.vw{width:49px;height:26px;display:flex;align-items:center;justify-content:center;flex:none;margin-right:2px}
.vw.active{background:#dedede;margin-right:-.5px}
.zm{position:relative;display:block;width:10px;height:10px}
.zm::before{content:"";position:absolute;left:0;top:4.500px;width:10px;height:1px;background:#444}
.plus::after{content:"";position:absolute;left:4.500px;top:0;width:1px;height:10px;background:#444}
.minus{margin-left:7.500px}
.slider{width:126px;height:1px;background:#555;margin-left:7px;position:relative}
.slider i{position:absolute;left:58px;top:-7px;width:6px;height:14px;background:#666}
.plus{margin-left:5px}
.zoomv{margin-left:13px;margin-right:11px;font-size:12.500px;color:#444}

.taskbar{flex:1;background:#273740}
.taskbar i{display:block;width:45px;height:100%;margin-left:966.500px;background:#4e5b60}

.watermark{position:absolute;left:1554px;top:935px;color:rgba(130,130,130,.5);pointer-events:none;white-space:nowrap}
.w1{font-size:24px;line-height:32px}
.w2t{font-size:17px;line-height:22px;margin-top:3px}
```
